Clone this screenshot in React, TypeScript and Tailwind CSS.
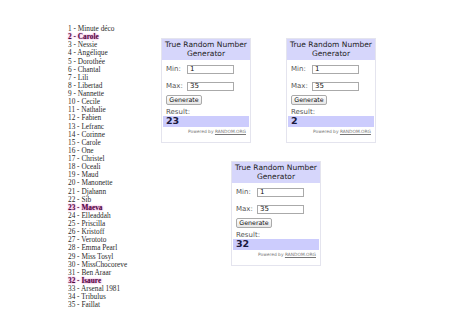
const NAMES = [
  "Minute déco", "Carole", "Nessie", "Angélique", "Dorothée", "Chantal", "Lili", "Libertad",
  "Nannette", "Cecile", "Nathalie", "Fabien", "Lefranc", "Corinne", "Carole", "One",
  "Christel", "Oceali", "Maud", "Manonette", "Djahann", "Sib", "Maeva", "Elleaddah",
  "Priscilla", "Kristoff", "Verototo", "Emma Pearl", "Miss Tosyl", "MissChocoreve", "Ben Araar",
  "Isaure", "Arsenal 1981", "Tribulus", "Faillat",
];

const WINNERS = [2, 23, 32];

function Widget({ result }: { result: string }) {
  return (
    <div className="w-[90px] h-[105px] border border-[#e4e4ee] bg-white flex flex-col font-['DejaVu_Sans',sans-serif] text-[#333]">
      <div className="h-[21px] bg-[#d6d6fb] flex items-center justify-center text-center text-[7.5px] leading-[8.5px] text-[#222]">
        True Random Number<br />Generator
      </div>
      <div className="flex flex-col px-[4px] pt-[5px] text-[7px]">
        <div className="flex items-center h-[9px]">
          <span className="w-[21px] text-[#555]">Min:</span>
          <div className="w-[47px] h-[9px] border border-[#aaa] bg-white px-[2px] leading-[7px] text-[#111]">1</div>
        </div>
        <div className="flex items-center h-[9px] mt-[8px]">
          <span className="w-[21px] text-[#555]">Max:</span>
          <div className="w-[47px] h-[9px] border border-[#aaa] bg-white px-[2px] leading-[7px] text-[#111]">35</div>
        </div>
        <div className="mt-[4px] w-[36px] h-[10px] rounded-[2px] border border-[#aaa] bg-gradient-to-b from-white to-[#e6e6e6] flex items-center justify-center text-[6.3px] text-[#111]">
          Generate
        </div>
        <div className="mt-[3px] text-[#555] leading-[8px]">Result:</div>
      </div>
      <div className="mx-[1px] h-[11px] bg-[#ccccfd] px-[3px] flex items-center text-[9.5px] font-bold text-[#1a1a40]">
        {result}
      </div>
      <div className="mt-auto mb-[6px] pr-[4px] text-right text-[4.4px] text-[#777]">
        Powered by <span className="underline">RANDOM.ORG</span>
      </div>
    </div>
  );
}

export default function App() {
  return (
    <div className="w-[474px] h-[335px] bg-white flex overflow-hidden">
      <div className="w-[161px] shrink-0 pl-[68px] pt-[25px] font-['Liberation_Serif',serif] text-[7.3px] leading-[8.12px] text-[#2a2a2a]">
        {NAMES.map((n, i) => {
          const num = i + 1;
          const win = WINNERS.includes(num);
          return (
            <div
              key={num}
              className={win ? "font-bold text-[#4a0a3e] [text-shadow:0_0_2px_#e040b0]" : ""}
            >
              {num} - {n}
            </div>
          );
        })}
      </div>
      <div className="flex flex-col pt-[38px]">
        <div className="flex gap-[35px]">
          <Widget result="23" />
          <Widget result="2" />
        </div>
        <div className="ml-[70px] mt-[18px]">
          <Widget result="32" />
        </div>
      </div>
    </div>
  );
}
